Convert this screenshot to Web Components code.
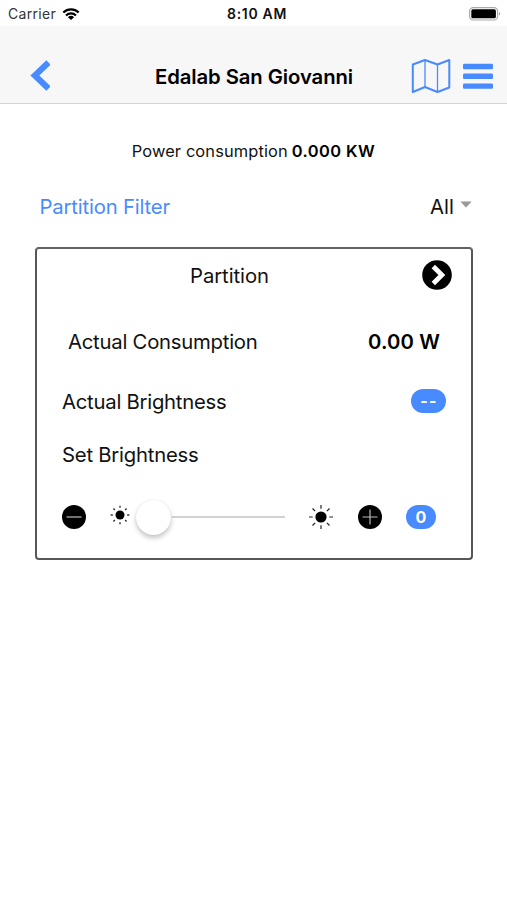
<!DOCTYPE html>
<html lang="en">
<head>
<meta charset="utf-8">
<title>Edalab San Giovanni</title>
<style>
html,body{margin:0;background:#fff}
body{width:507px;height:900px;overflow:hidden;font-family:Inter,"Liberation Sans",sans-serif;color:#111}
</style>
</head>
<body>
<energy-app></energy-app>
<script>
function define(name, html, setup) {
  const t = document.createElement('template');
  t.innerHTML = html;
  customElements.define(name, class extends HTMLElement {
    connectedCallback() {
      if (this.shadowRoot) return;
      this.attachShadow({mode: 'open'}).append(t.content.cloneNode(true));
      if (setup) setup(this);
    }
  });
}

/* Single-line label whose tracking is set so that it spans a given width. */
define('ui-label', `<style>
:host{display:block;white-space:nowrap;font-size:20.3px;line-height:24px;padding-top:1px}
span{display:inline-block}
</style><span><slot></slot></span>`, el => {
  const w = parseFloat(el.getAttribute('span'));
  const s = el.shadowRoot.querySelector('span');
  const natural = s.getBoundingClientRect().width;
  const n = el.shadowRoot.querySelector('slot').assignedNodes({flatten: true})
    .reduce((sum, node) => sum + node.textContent.length, 0);
  if (w && natural && n) {
    s.style.letterSpacing = ((w - natural) / n).toFixed(3) + 'px';
    el.style.width = w + 'px';
  }
});

define('ui-badge', `<style>
:host{display:flex;align-items:center;justify-content:center;height:24px;border-radius:12px;background:#488aff;color:#fff;font-size:16px;font-weight:700;line-height:24px}
</style><slot></slot>`);

const icons = {
  back: ['0 0 20 32', '<path d="M18.500 2.500 4.900 15.500 18.500 28.500" fill="none" stroke="#488aff" stroke-width="6.2"/>'],
  map: ['0 0 40 36', '<g fill="none" stroke="#488aff" stroke-linejoin="round"><path stroke-width="2" d="M1.8 6.5 14 2 26.500 6.500 38.300 2V29.500L26.500 34 14 29 1.800 34Z"/><path stroke-width="1.3" d="M14 2V29M26.500 6.500V34"/></g>'],
  menu: ['0 0 30 26', '<g fill="#488aff"><rect width="30" height="5.400" y=".8" rx="1.200"/><rect width="30" height="5.400" y="10.600" rx="1.200"/><rect width="30" height="5.400" y="20.400" rx="1.200"/></g>'],
  go: ['0 0 30 30', '<circle cx="15" cy="15" r="14.800"/><path d="M11.300 6.500 19.900 15 11.300 23.500" fill="none" stroke="#fff" stroke-width="4.800"/>'],
  minus: ['0 0 24 24', '<circle cx="12" cy="12" r="12"/><path d="M4.500 12h15" stroke="#bbb" stroke-width="1.200"/>'],
  plus: ['0 0 24 24', '<circle cx="12" cy="12" r="12"/><path d="M4.500 12h15M12 4.500v15" stroke="#bbb" stroke-width="1.200"/>'],
  sun: ['0 0 24 24', '<circle cx="12" cy="12" r="5.600"/><path d="M12 0v3.700M12 20.300V24M0 12h3.700M20.300 12H24M3.500 3.500l2.600 2.600M17.900 17.900l2.600 2.600M3.500 20.500l2.600-2.600M17.900 6.100l2.600-2.600" stroke="#222" stroke-width="1.200"/>'],
  sunlow: ['0 0 20 20', '<circle cx="10" cy="10" r="4.500"/><path d="M10 .7v2.100M10 17.200v2.100M.7 10h2.100M17.200 10h2.100M3.400 3.400l1.500 1.500M15.100 15.100l1.500 1.500M3.400 16.600l1.500-1.500M15.100 4.900l1.500-1.500" stroke="#333" stroke-width="1.400"/>'],
  wifi: ['0 0 18 13', '<g fill="none" stroke="#000" stroke-width="2.200"><path d="M1.300 4.500a11 11 0 0 1 15.400 0"/><path d="M4 7.500a7.100 7.100 0 0 1 10 0"/></g><path d="M9 12 5.900 9.200a4.500 4.500 0 0 1 6.200 0Z"/>'],
  battery: ['0 0 33 15', '<rect x="1.600" y=".6" width="28" height="12.400" rx="3.600" fill="#fff" stroke="#aaa" stroke-width="1.200"/><rect x="3.300" y="2.300" width="24.600" height="9" rx="1.600"/><path d="M31 5q2 1.900 0 3.800z" fill="#999"/>'],
  caret: ['0 0 12 7', '<path d="M.3.400h11.400L6 6.600z" fill="#999"/>']
};
customElements.define('ui-icon', class extends HTMLElement {
  connectedCallback() {
    if (this.shadowRoot) return;
    const [box, art] = icons[this.getAttribute('name')];
    const [, , w, h] = box.split(' ');
    this.attachShadow({mode: 'open'}).innerHTML =
      `<style>:host{display:block;flex:none}svg{display:block}</style><svg width="${w}" height="${h}" viewBox="${box}">${art}</svg>`;
  }
});

define('status-bar', `<style>
:host{display:grid;grid-template-columns:1fr auto 1fr;align-items:center;box-sizing:border-box;height:26px;padding:1px 6px 0 8px;background:#fff}
ui-label{font-size:14px;line-height:26px;padding-top:0}
.l{display:flex;align-items:center;gap:6px;color:#333}
.t{font-weight:600;color:#111;margin-left:5px}
.r{justify-self:end}
</style>
<div class="l"><ui-label span="48">Carrier</ui-label><ui-icon name="wifi"></ui-icon></div>
<ui-label class="t" span="60">8:10 AM</ui-label>
<ui-icon class="r" name="battery"></ui-icon>`);

define('nav-bar', `<style>
:host{display:grid;grid-template-columns:1fr auto 1fr;align-items:center;box-sizing:border-box;height:78px;padding:23px 14px 0 30px;background:#f7f7f7;border-bottom:1px solid #d4d4d4}
ui-label{font-weight:600;color:#000}
.a{justify-self:end;display:flex;align-items:center;gap:12px}
.title{margin-left:-15px}
</style>
<ui-icon name="back"></ui-icon>
<ui-label class="title" span="198"><slot></slot></ui-label>
<div class="a"><ui-icon name="map"></ui-icon><ui-icon name="menu"></ui-icon></div>`);

define('power-summary', `<style>
:host{display:flex;justify-content:center;align-items:center;height:54px;padding-top:20px;gap:4px}
ui-label{font-size:16.400px;padding-top:0}
b{font-weight:600;color:#000}
</style>
<ui-label span="156">Power consumption</ui-label>
<b><ui-label span="83.5">0.000 KW</ui-label></b>`);

define('partition-filter', `<style>
:host{display:flex;justify-content:space-between;align-items:center;height:56px;padding:0 35px 0 39.5px}
.n{color:#488aff}
.s{display:flex;align-items:center;gap:6px}
.s ui-icon{margin-top:-4px}
</style>
<ui-label class="n" span="130.5">Partition Filter</ui-label>
<div class="s"><ui-label span="24">All</ui-label><ui-icon name="caret"></ui-icon></div>`);

define('brightness-slider', `<style>
:host{display:flex;align-items:center;width:149px;height:36px}
.k{width:35px;height:35px;border-radius:50%;background:#fff;box-shadow:0 3px 5px rgba(0,0,0,.23),0 0 1px rgba(0,0,0,.12);flex:none}
.t{height:2px;background:#d2d2d2;width:114px}
</style><div class="k"></div><div class="t"></div>`);

define('partition-card', `<style>
:host{display:grid;grid-template-rows:52px 80px 40px 67px 58px;box-sizing:border-box;width:438px;height:313px;margin:13px 0 0 35px;border:2px solid #555758;border-top-color:#606263;border-radius:4px}
.row{display:flex;align-items:center;justify-content:space-between}
.head{padding:0 19px 0 153px}
.use{padding:0 31px}
.use b{font-weight:600;color:#000}
.now{padding:0 25px}
.now ui-badge{width:35px;letter-spacing:1.200px;text-indent:1px}
.set{padding:0 25px}
.ctl{justify-content:flex-start;padding-left:25px}
.ctl .lo{margin:-4px 6px 0 24px}
.ctl .hi{margin:0 25px 0 24px}
.ctl ui-badge{width:30px;margin-left:24px}
</style>
<div class="row head"><ui-label span="79">Partition</ui-label><ui-icon name="go"></ui-icon></div>
<div class="row use"><ui-label span="189.5">Actual Consumption</ui-label><b><ui-label span="72">0.00 W</ui-label></b></div>
<div class="row now"><ui-label span="164.5">Actual Brightness</ui-label><ui-badge>--</ui-badge></div>
<div class="row set"><ui-label span="136.5">Set Brightness</ui-label></div>
<div class="row ctl"><ui-icon name="minus"></ui-icon><ui-icon class="lo" name="sunlow"></ui-icon><brightness-slider></brightness-slider><ui-icon class="hi" name="sun"></ui-icon><ui-icon name="plus"></ui-icon><ui-badge>0</ui-badge></div>`);

define('energy-app', `<style>:host{display:block;width:507px;height:900px;background:#fff}</style>
<status-bar></status-bar>
<nav-bar>Edalab San Giovanni</nav-bar>
<power-summary></power-summary>
<partition-filter></partition-filter>
<partition-card></partition-card>`);
</script>
</body>
</html>
